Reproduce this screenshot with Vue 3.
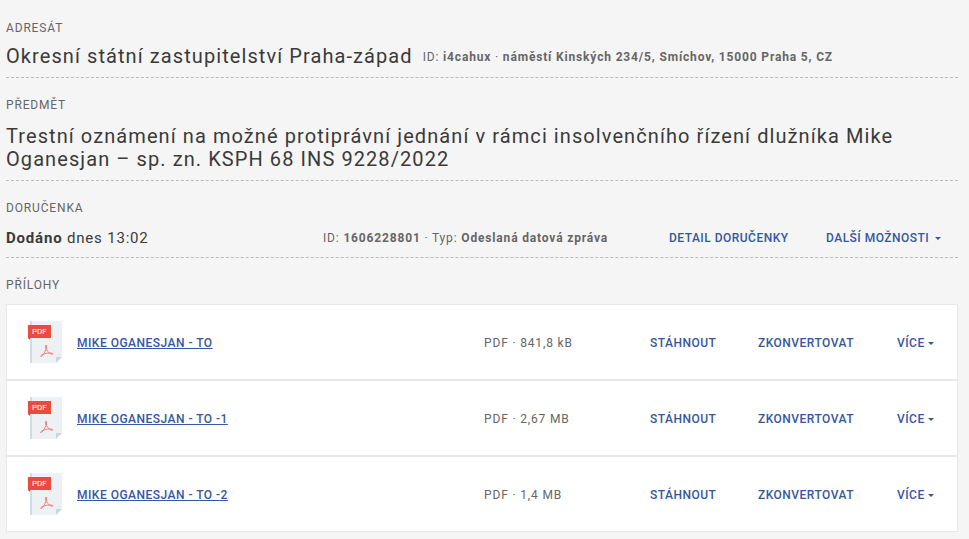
<script setup>
const files = [
  { name: 'MIKE OGANESJAN - TO', size: '841,8 kB' },
  { name: 'MIKE OGANESJAN - TO -1', size: '2,67 MB' },
  { name: 'MIKE OGANESJAN - TO -2', size: '1,4 MB' },
]
</script>

<template>
  <main class="message">
    <section class="section recipient">
      <h2 class="label">ADRESÁT</h2>
      <div class="line">
        <span class="title">Okresní státní zastupitelství Praha-západ</span>
        <span class="meta">ID: <b>i4cahux</b> · <b>náměstí Kinských 234/5, Smíchov, 15000 Praha 5, CZ</b></span>
      </div>
    </section>
    <section class="section subject">
      <h2 class="label">PŘEDMĚT</h2>
      <h1 class="title">Trestní oznámení na možné protiprávní jednání v rámci insolvenčního řízení dlužníka Mike Oganesjan – sp. zn. KSPH 68 INS 9228/2022</h1>
    </section>
    <section class="section receipt">
      <h2 class="label">DORUČENKA</h2>
      <div class="receipt-row">
        <span class="status"><b>Dodáno</b> dnes 13:02</span>
        <span class="meta">ID: <b>1606228801</b> · Typ: <b>Odeslaná datová zpráva</b></span>
        <button class="action" type="button">DETAIL DORUČENKY</button>
        <button class="action more" type="button">DALŠÍ MOŽNOSTI<i class="caret"></i></button>
      </div>
    </section>
    <section class="attachments">
      <h2 class="label">PŘÍLOHY</h2>
      <ul class="files">
        <li v-for="file in files" :key="file.name" class="file">
          <svg class="icon" viewBox="0 0 34 42" aria-hidden="true">
            <path d="M2 0H34V36L28 42H2Z" fill="#edf1f4" />
            <path d="M2 0H4V42H2Z" fill="#d3dae0" />
            <path d="M28 36H34L28 42Z" fill="#cbd5dd" />
            <path d="M0 17H2V19Z" fill="#b83a2e" />
            <path d="M0 4H23V17H0Z" fill="#e74c3c" />
            <text x="4" y="13" class="icon-text">PDF</text>
            <path d="M18.3 24.2C17.6 23.8 17.3 24.6 17.6 26C18 29 20.5 32 23.5 33.2C25 33.7 25.5 32.6 24 32.2C21 31.4 16 32.6 13.5 34.2C12 35.2 12.6 36.4 13.8 35.2C16 33 18.3 28.8 18.6 26C18.7 25 18.7 24.4 18.3 24.2Z" fill="none" stroke="#e77b70" stroke-width="0.9" />
          </svg>
          <a class="name" href="#">{{ file.name }}</a>
          <span class="size">PDF · {{ file.size }}</span>
          <button class="action" type="button">STÁHNOUT</button>
          <button class="action" type="button">ZKONVERTOVAT</button>
          <button class="action more" type="button">VÍCE<i class="caret"></i></button>
        </li>
      </ul>
    </section>
  </main>
</template>

<style>
body { background: #f5f5f5; }
</style>
<style scoped>
.message { padding: 20px 11px 7px 6px; font-family: Roboto, sans-serif; color: #3a3a3a; }
.section { border-bottom: 1px dashed #bbb; margin-bottom: 19px; }
.label { margin: 0; font-size: 12px; line-height: 16px; font-weight: 400; letter-spacing: 0.07em; color: #666; }
.title { margin: 0; font-size: 20px; line-height: 23px; font-weight: 400; letter-spacing: 0.054em; }
.meta, .size { font-size: 12px; line-height: 16px; color: #666; letter-spacing: 0.07em; }
.line { display: flex; align-items: center; gap: 10px; padding: 9px 0; }
.subject .title { padding: 12px 0 9px; }
.receipt-row { display: grid; grid-template-columns: 317fr 346fr 157fr 132fr; align-items: center; padding: 12px 0 9px; }
.status { font-size: 15px; line-height: 20px; letter-spacing: 0.054em; }
.action { justify-self: start; padding: 0; border: 0; background: none; color: #3557a0; font: 500 12px/16px Roboto, sans-serif; letter-spacing: 0.04em; cursor: pointer; }
.more { display: flex; align-items: center; gap: 6px; }
.caret { border: 3px solid transparent; border-top-color: currentColor; border-bottom: 0; }
.files { margin: 11px 0 0; padding: 0; list-style: none; }
.file { display: grid; grid-template-columns: 49px 407fr 166fr 108fr 139fr 40fr; align-items: center; height: 76px; padding: 2px 20px 0 21px; box-sizing: border-box; background: #fff; border: 1px solid #e8e8e8; }
.icon { width: 34px; height: 42px; margin-bottom: 2px; }
.icon-text { font-size: 8px; fill: #fff; }
.name { color: #3557a0; font-size: 12px; line-height: 16px; font-weight: 500; letter-spacing: 0.04em; }
.file .more { gap: 3px; }
</style>
